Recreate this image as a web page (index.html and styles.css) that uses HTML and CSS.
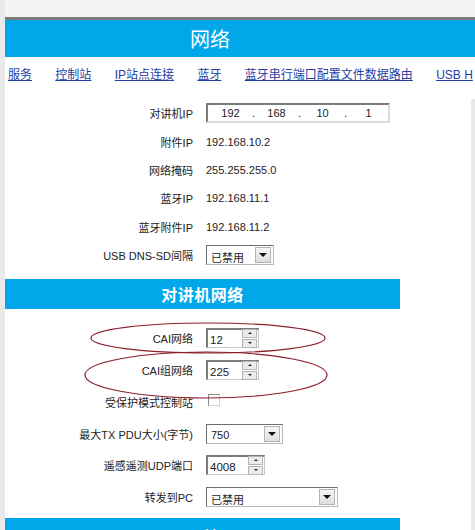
FILE: index.html
```html
<!DOCTYPE html>
<html lang="zh-CN">
<head>
    <meta charset="UTF-8">
    <title>网络</title>
    <link rel="stylesheet" href="styles.css">
</head>
<body>
    <div class="topband"></div>
    <div class="page">
        <div class="banner">网络</div>
        <div class="nav">
            <a href="#">服务</a>
            <a href="#">控制站</a>
            <a href="#">IP站点连接</a>
            <a href="#">蓝牙</a>
            <a href="#">蓝牙串行端口配置文件数据路由</a>
            <a href="#">USB H</a>
        </div>

        <div class="content">
            <div class="form">
                <div class="row">
                    <div class="label">对讲机IP</div>
                    <div class="value">
                        <div class="ipbox">
                            <span class="seg">192</span><span class="dot">.</span>
                            <span class="seg">168</span><span class="dot">.</span>
                            <span class="seg">10</span><span class="dot">.</span>
                            <span class="seg">1</span>
                        </div>
                    </div>
                </div>
                <div class="row">
                    <div class="label">附件IP</div>
                    <div class="value">192.168.10.2</div>
                </div>
                <div class="row">
                    <div class="label">网络掩码</div>
                    <div class="value">255.255.255.0</div>
                </div>
                <div class="row">
                    <div class="label">蓝牙IP</div>
                    <div class="value">192.168.11.1</div>
                </div>
                <div class="row">
                    <div class="label">蓝牙附件IP</div>
                    <div class="value">192.168.11.2</div>
                </div>
                <div class="row">
                    <div class="label">USB DNS-SD间隔</div>
                    <div class="value">
                        <div class="select select-usb"><span class="text">已禁用</span><span class="arrow"></span></div>
                    </div>
                </div>
            </div>

            <div class="section">对讲机网络</div>

            <div class="form form-radio">
                <div class="row">
                    <div class="label">CAI网络</div>
                    <div class="value">
                        <div class="spin spin-short"><span class="text">12</span><span class="btns"><span class="up"></span><span class="down"></span></span></div>
                    </div>
                </div>
                <div class="row">
                    <div class="label">CAI组网络</div>
                    <div class="value">
                        <div class="spin spin-short"><span class="text">225</span><span class="btns"><span class="up"></span><span class="down"></span></span></div>
                    </div>
                </div>
                <div class="row">
                    <div class="label">受保护模式控制站</div>
                    <div class="value"><span class="check"></span></div>
                </div>
                <div class="row">
                    <div class="label">最大TX PDU大小(字节)</div>
                    <div class="value">
                        <div class="select select-pdu"><span class="text">750</span><span class="arrow"></span></div>
                    </div>
                </div>
                <div class="row">
                    <div class="label">遥感遥测UDP端口</div>
                    <div class="value">
                        <div class="spin spin-port"><span class="text">4008</span><span class="btns"><span class="up"></span><span class="down"></span></span></div>
                    </div>
                </div>
                <div class="row">
                    <div class="label">转发到PC</div>
                    <div class="value">
                        <div class="select select-pc"><span class="text">已禁用</span><span class="arrow"></span></div>
                    </div>
                </div>
            </div>

            <div class="section section-next">网关</div>
        </div>
    </div>

    <!-- red marks drawn over the screenshot -->
    <svg class="marks" width="475" height="530" viewBox="0 0 475 530">
        <ellipse cx="208" cy="338" rx="117" ry="15" fill="none" stroke="#8c1f2c" stroke-width="1.2"/>
        <ellipse cx="206" cy="375" rx="121" ry="23" fill="none" stroke="#8c1f2c" stroke-width="1.2"/>
    </svg>
</body>
</html>
```

FILE: styles.css
```css
body {
    margin: 0;
    padding: 0;
    background-color: #e9e9e9;
    font-family: "Liberation Sans", Arial, "Noto Sans CJK SC", sans-serif;
    font-size: 11px;
    color: #222;
    overflow: hidden;
    height: 530px;
    position: relative;
}

.topband {
    height: 17px;
    margin-left: 5px;
    background-color: #f4f4f4;
}

.page {
    margin-left: 5px;
}

.banner {
    height: 37px;
    line-height: 37px;
    border-top: 3px solid #7a7a7a;
    background-color: #00a8ea;
    color: white;
    font-family: "Noto Sans CJK SC", sans-serif;
    font-size: 20px;
    padding-left: 185px;
}

.nav {
    height: 31px;
    padding: 11px 0 0 3px;
    background-color: white;
    white-space: nowrap;
    overflow: hidden;
    font-size: 12px;
    line-height: 14px;
}

.nav a {
    color: #1f3ea6;
    text-decoration: underline;
    margin-right: 20px;
}

.content {
    background-color: white;
    margin-right: 4px;
    height: 431px;
    overflow: hidden;
}

.form {
    padding-bottom: 10px;
}

.row {
    display: grid;
    grid-template-columns: 188px 1fr;
    column-gap: 13px;
    height: 28.4px;
    align-items: center;
}

.form-radio {
    padding-top: 13px;
    padding-bottom: 5px;
}

.form-radio .row {
    height: 31.8px;
}

.label {
    text-align: right;
}

.value {
    display: flex;
    align-items: center;
}

.section {
    width: 395px;
    height: 30px;
    line-height: 30px;
    background-color: #00a8ea;
    color: white;
    text-align: center;
    font-family: "Noto Sans CJK SC", sans-serif;
    font-size: 16px;
    font-weight: bold;
    letter-spacing: 0.5px;
}

.section-next {
    line-height: 36px;
}

/* ip address box */
.ipbox {
    width: 176px;
    height: 16px;
    display: flex;
    align-items: center;
    padding-left: 4px;
    border: 2px solid;
    border-color: #7c7c7c #dcdcdc #dcdcdc #7c7c7c;
    background-color: white;
}

.ipbox .seg {
    width: 37px;
    text-align: center;
}

.ipbox .dot {
    width: 9px;
    text-align: center;
}

/* drop down */
.select {
    height: 18px;
    display: flex;
    align-items: center;
    justify-content: space-between;
    border: 1px solid;
    border-color: #6e6e6e #b8b8b8 #b8b8b8 #6e6e6e;
    background-color: white;
}

.select .text {
    padding: 3px 0 0 4px;
}

.select .arrow {
    width: 14px;
    height: 14px;
    margin-right: 2px;
    border: 1px solid #b4b4b4;
    background: linear-gradient(#f6f6f6, #dedede);
    position: relative;
}

.select .arrow::after {
    content: "";
    position: absolute;
    left: 3px;
    top: 5px;
    border-left: 4px solid transparent;
    border-right: 4px solid transparent;
    border-top: 4px solid #111;
}

.select-usb { width: 66px; }
.select-pdu { width: 75px; }
.select-pc { width: 130px; }

/* number spinner */
.spin {
    height: 17px;
    display: flex;
    align-items: center;
    justify-content: space-between;
    border: 1px solid;
    border-top-width: 2px;
    border-left-width: 2px;
    border-color: #7c7c7c #c8c8c8 #c8c8c8 #7c7c7c;
    background-color: white;
}

.spin .text {
    padding: 3px 0 0 2px;
    font-size: 11.5px;
}

.spin .btns {
    display: flex;
    flex-direction: column;
    gap: 1px;
    margin-right: 1px;
}

.spin .up,
.spin .down {
    width: 13px;
    height: 7px;
    border: 1px solid #b4b4b4;
    background-color: #ececec;
    position: relative;
}

.spin .up::after,
.spin .down::after {
    content: "";
    position: absolute;
    left: 5px;
    top: 2px;
    border-left: 2px solid transparent;
    border-right: 2px solid transparent;
}

.spin .up::after { border-bottom: 2px solid #222; }
.spin .down::after { border-top: 2px solid #222; }

.spin-short { width: 50px; }
.spin-port { width: 56px; }

.check {
    width: 10px;
    height: 10px;
    margin-left: 2px;
    margin-top: -4px;
    border: 1px solid;
    border-color: #8a8a8a #d4d4d4 #d4d4d4 #8a8a8a;
    background-color: white;
}

.marks {
    position: absolute;
    left: 0;
    top: 0;
    pointer-events: none;
}
```
